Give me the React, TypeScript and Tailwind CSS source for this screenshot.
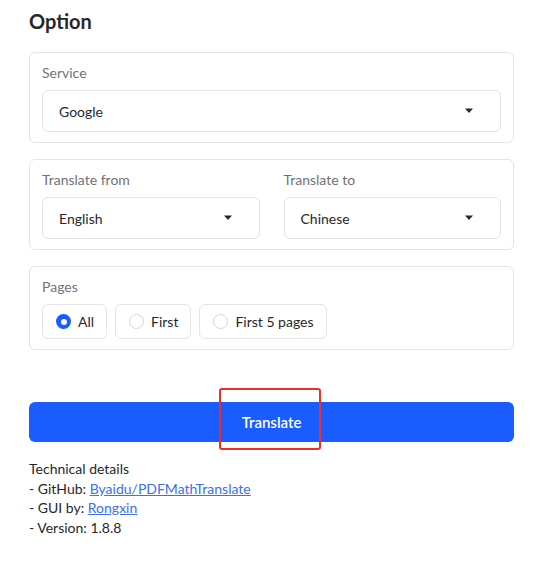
import React from 'react';

const font = { fontFamily: 'Lato, "Noto Sans", sans-serif' };

function Caret() {
  return (
    <svg width="10" height="6" viewBox="0 0 10 6" className="shrink-0">
      <path d="M1 0.5 L9 0.5 L5 5 Z" fill="#1f2937" />
    </svg>
  );
}

function Select({ value }: { value: string }) {
  return (
    <div className="h-[42px] border border-[#e4e4e7] rounded-md flex items-center justify-between pl-4 pr-[26px] text-[14px] text-[#27272a]">
      <span>{value}</span>
      <Caret />
    </div>
  );
}

function Label({ children }: { children: React.ReactNode }) {
  return <div className="text-[14px] leading-[18px] text-[#71717a] mt-[1px] mb-[8px]">{children}</div>;
}

function Card({ children }: { children: React.ReactNode }) {
  return <div className="border border-[#e4e4e7] rounded-md px-3 py-[10px]">{children}</div>;
}

function Radio({ label, checked }: { label: string; checked?: boolean }) {
  return (
    <div className="h-[35px] border border-[#e4e4e7] rounded-md flex items-center gap-[7px] pl-[13px] pr-[12px] text-[14px] text-[#27272a]">
      {checked ? (
        <span className="w-[15px] h-[15px] rounded-full bg-[#1a5cff] flex items-center justify-center">
          <span className="w-[6px] h-[6px] rounded-full bg-white" />
        </span>
      ) : (
        <span className="w-[15px] h-[15px] rounded-full border border-[#d4d4d8] bg-white" />
      )}
      <span>{label}</span>
    </div>
  );
}

export default function App() {
  return (
    <div className="min-h-[561px] bg-white pl-[29px] pr-[33px] pt-[6px] pb-6" style={font}>
      <h2 className="text-[20px] leading-[30px] font-bold text-[#27272a] mb-[16px]">Option</h2>

      <div className="flex flex-col gap-4">
        <Card>
          <Label>Service</Label>
          <Select value="Google" />
        </Card>

        <Card>
          <div className="grid grid-cols-2 gap-6">
            <div>
              <Label>Translate from</Label>
              <Select value="English" />
            </div>
            <div>
              <Label>Translate to</Label>
              <Select value="Chinese" />
            </div>
          </div>
        </Card>

        <Card>
          <Label>Pages</Label>
          <div className="flex gap-2">
            <Radio label="All" checked />
            <Radio label="First" />
            <Radio label="First 5 pages" />
          </div>
        </Card>
      </div>

      <div className="relative mt-[52px]">
        <button className="w-full h-10 rounded-md bg-[#1a5cff] text-white text-[15px] font-semibold">
          Translate
        </button>
        <div className="absolute left-[190px] top-[-14px] w-[102px] h-[62px] border-2 border-[#e8302a] rounded-[3px] pointer-events-none" />
      </div>

      <div className="mt-[17px] text-[14px] leading-[19.5px] text-[#27272a]">
        <div>Technical details</div>
        <div>
          - GitHub: <a href="#" className="text-[#3b6ff5] underline">Byaidu/PDFMathTranslate</a>
        </div>
        <div>
          - GUI by: <a href="#" className="text-[#3b6ff5] underline">Rongxin</a>
        </div>
        <div>- Version: 1.8.8</div>
      </div>
    </div>
  );
}
